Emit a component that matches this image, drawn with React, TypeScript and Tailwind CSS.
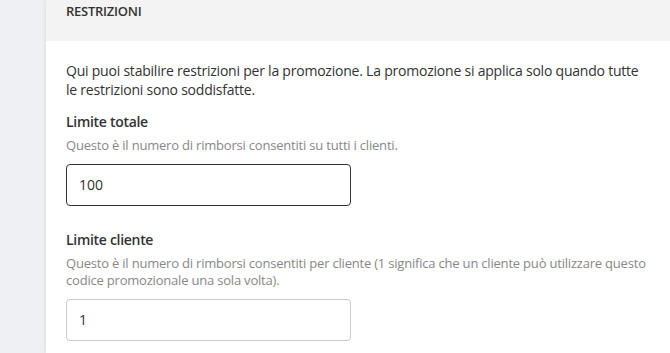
export default function App() {
  return (
    <div className="flex h-[353px] w-[670px] overflow-hidden bg-[#eef0f3]" style={{ fontFamily: '"Open Sans", sans-serif' }}>
      <div className="w-[46px] shrink-0" />
      <div className="flex-1 bg-white shadow-[0_0_4px_rgba(0,0,0,0.12)]">
        <div className="flex h-[41px] items-start bg-[#f3f3f3] px-5 pt-[2px]">
          <span className="text-[13px] font-semibold tracking-[-0.25px] text-[#333]">RESTRIZIONI</span>
        </div>
        <div className="pl-5 pr-[24px] pt-[20px]">
          <p className="text-[14px] leading-[19px] tracking-[-0.22px] text-[#333]">
            Qui puoi stabilire restrizioni per la promozione. La promozione si applica solo quando tutte le restrizioni sono soddisfatte.
          </p>
          <div className="mt-[12px] text-[14px] font-semibold tracking-[-0.3px] text-[#333]">Limite totale</div>
          <div className="mt-[4px] text-[13px] tracking-[-0.2px] text-[#888]">Questo è il numero di rimborsi consentiti su tutti i clienti.</div>
          <div className="mt-[8px] flex h-[42px] w-[285px] items-center rounded-[4px] border border-[#333] px-3 text-[14px] text-[#333]">100</div>
          <div className="mt-[23px] text-[14px] font-semibold tracking-[-0.3px] text-[#333]">Limite cliente</div>
          <div className="mt-[5px] text-[13px] leading-[17px] tracking-[-0.2px] text-[#888]">Questo è il numero di rimborsi consentiti per cliente (1 significa che un cliente può utilizzare questo codice promozionale una sola volta).</div>
          <div className="mt-[10px] flex h-[42px] w-[285px] items-center rounded-[4px] border border-[#ccc] px-3 text-[14px] text-[#333]">1</div>
        </div>
      </div>
    </div>
  );
}
